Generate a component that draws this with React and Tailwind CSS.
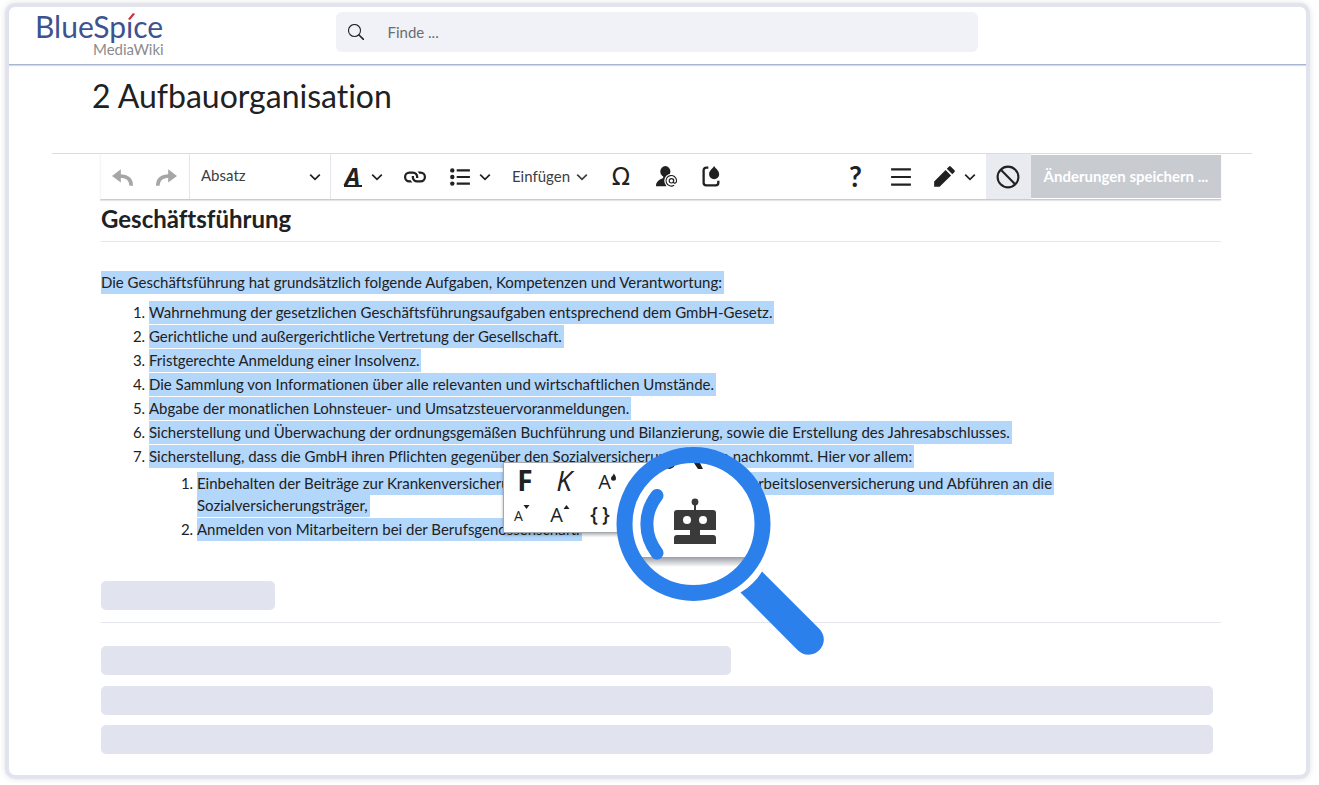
import React from 'react';

const tasks = [
  'Wahrnehmung der gesetzlichen Geschäftsführungsaufgaben entsprechend dem GmbH-Gesetz.',
  'Gerichtliche und außergerichtliche Vertretung der Gesellschaft.',
  'Fristgerechte Anmeldung einer Insolvenz.',
  'Die Sammlung von Informationen über alle relevanten und wirtschaftlichen Umstände.',
  'Abgabe der monatlichen Lohnsteuer- und Umsatzsteuervoranmeldungen.',
  'Sicherstellung und Überwachung der ordnungsgemäßen Buchführung und Bilanzierung, sowie die Erstellung des Jahresabschlusses.',
];

const subTasks = [
  'Einbehalten der Beiträge zur Krankenversicherung, Unfallversicherung, Renten- und Arbeitslosenversicherung und Abführen an die Sozialversicherungsträger,',
  'Anmelden von Mitarbeitern bei der Berufsgenossenschaft.',
];

const Marked = ({ children }) => (
  <span className="bg-[#b3d6fb] box-decoration-clone pt-[2px] pb-[3px] pr-[2px]">{children}</span>
);

const Icon = ({ children, className = 'w-5 h-5' }) => (
  <svg viewBox="0 0 20 20" fill="currentColor" className={`shrink-0 ${className}`} aria-hidden="true">
    {children}
  </svg>
);

const Chevron = ({ className = 'w-3 h-3' }) => (
  <Icon className={className}>
    <path d="m2 6 8 8 8-8" fill="none" stroke="currentColor" strokeWidth="2.8" />
  </Icon>
);

const Tool = ({ label, className, children, ...rest }) => (
  <button
    type="button"
    aria-label={label}
    className={`h-full shrink-0 flex items-center justify-center ${className}`}
    {...rest}
  >
    {children}
  </button>
);

const Header = () => (
  <header className="grid grid-cols-[1fr_642px_1fr] items-start h-[58px] border-b border-[#a9b4d2] shadow-[0_1px_1px_#d5dbe9]">
    <a href="#start" className="ml-[25px] w-[136px] h-[54px] block" aria-label="BlueSpice MediaWiki">
      <svg viewBox="0 0 136 54" className="w-[136px] h-[54px] font-['Lato',sans-serif]">
        <text x="1" y="31" fontSize="30" fill="#3c5390">BlueSp&#305;ce</text>
        <path d="M99 6 L101 7 L96 13 L94 12 Z" fill="#c8333a" />
        <text x="59" y="48" fontSize="15" fill="#8c8c8c">MediaWiki</text>
      </svg>
    </a>
    <label className="flex items-center h-10 mt-[5px] -ml-px mr-px rounded-md bg-[#f1f2f7] text-[#212529]">
      <svg viewBox="0 0 16 16" className="w-4 h-4 ml-3 mr-6" fill="none" stroke="currentColor" aria-hidden="true">
        <circle cx="6.500" cy="6.500" r="6" strokeWidth="1.100" />
        <path d="m11 11 4.500 4.500" strokeWidth="1.600" strokeLinecap="round" />
      </svg>
      <input
        type="search"
        aria-label="Suche"
        placeholder="Finde ..."
        className="flex-1 min-w-0 bg-transparent text-[15px] outline-none placeholder:text-[#6a6d72]"
      />
    </label>
  </header>
);

const Toolbar = () => (
  <div className="ml-12 mr-[31px] flex items-stretch h-[46px] border-b border-[#c8ccd1] border-l border-l-[#f5f5f7] shadow-[0_1px_1px_#e6e6e6]">
    <div className="flex w-[89px] border-r border-[#e4e5ec] text-[#a6a6a6]">
      <Tool label="Rückgängig" className="w-11" disabled>
        <Icon className="w-[22px] h-[22px]">
          <path d="M0 9 8 3v12z" />
          <path d="M7 9C13.500 9 17.500 11.500 17.500 18" fill="none" stroke="currentColor" strokeWidth="3.200" />
        </Icon>
      </Tool>
      <Tool label="Wiederholen" className="w-[42px]" disabled>
        <Icon className="w-[22px] h-[22px]">
          <path d="M20 9 12 3v12z" />
          <path d="M13 9C6.500 9 2.500 11.500 2.500 18" fill="none" stroke="currentColor" strokeWidth="3.200" />
        </Icon>
      </Tool>
    </div>
    <div className="grid w-[141px] border-r border-[#e4e5ec] items-center">
      <select
        aria-label="Format"
        className="[grid-area:1/1] appearance-none w-full h-full pl-[11px] pb-[2px] text-[15px] bg-transparent text-[#3b3e42]"
      >
        <option>Absatz</option>
      </select>
      <Chevron className="[grid-area:1/1] justify-self-end mr-[9px] w-3 h-3 pointer-events-none" />
    </div>
    <Tool label="Textstil" className="w-[64px] gap-[9px]">
      <span className="w-[18px] border-b-2 border-current text-[24px] leading-[19px] font-bold italic font-['Open_Sans',sans-serif]">
        A
      </span>
      <Chevron />
    </Tool>
    <Tool label="Verknüpfung" className="w-10">
      <Icon className="w-[22px] h-[22px]">
        <path d="M4.830 15h2.910a4.900 4.900 0 0 1-1.550-2H5a3 3 0 1 1 0-6h3a3 3 0 0 1 2.820 4h2.100a5 5 0 0 0 .080-.830v-.340A4.830 4.830 0 0 0 8.170 5H4.830A4.830 4.830 0 0 0 0 9.830v.340A4.830 4.830 0 0 0 4.830 15" />
        <path d="M15.170 5h-2.910a4.900 4.900 0 0 1 1.550 2H15a3 3 0 1 1 0 6h-3a3 3 0 0 1-2.820-4h-2.100a5 5 0 0 0-.080.830v.340A4.830 4.830 0 0 0 11.830 15h3.340A4.830 4.830 0 0 0 20 10.170v-.340A4.830 4.830 0 0 0 15.170 5" />
      </Icon>
    </Tool>
    <Tool label="Liste" className="w-[70px] gap-2">
      <Icon className="w-[22px] h-[22px]">
        <path d="M7 15h12v2H7zm0-6h12v2H7zm0-6h12v2H7z" />
        <circle cx="3" cy="4" r="2" />
        <circle cx="3" cy="10" r="2" />
        <circle cx="3" cy="16" r="2" />
      </Icon>
      <Chevron />
    </Tool>
    <Tool className="w-[90px] gap-[6px] text-[15px] text-[#3b3e42]">
      Einfügen
      <Chevron />
    </Tool>
    <Tool label="Sonderzeichen" className="w-[52px] text-[24px] font-['DejaVu_Sans',sans-serif]">
      Ω
    </Tool>
    <Tool label="Benutzer erwähnen" className="w-[40px]">
      <Icon className="w-[22px] h-[22px]">
        <ellipse cx="8.500" cy="5" rx="4.600" ry="4.900" />
        <path d="M0 18.500C0 14 3 12.500 6.500 11V8.500h4v2.500l2 1-3 6.500z" />
        <circle cx="14" cy="13.500" r="6.500" fill="white" />
        <circle cx="14" cy="13.500" r="2" fill="none" stroke="currentColor" strokeWidth="1" />
        <path d="M16 11.500v3.200c0 1.500 2.700 1.200 2.700-1.300a4.800 4.800 0 1 0-2.200 4.100" fill="none" stroke="currentColor" strokeWidth="1" />
      </Icon>
    </Tool>
    <Tool label="Semantik" className="w-12">
      <Icon className="w-[21px] h-[21px]">
        <path d="M7 1.500H5A2.500 2.500 0 0 0 2.500 4v12A2.500 2.500 0 0 0 5 18.500h9a2.500 2.500 0 0 0 2.500-2.500v-2" fill="none" stroke="currentColor" strokeWidth="2.200" />
        <path d="M12.500 0c1.500 2.500 4.800 4.500 4.800 7.800a4.800 4.800 0 0 1-9.600 0C7.700 4.500 11 2.500 12.500 0z" />
      </Icon>
    </Tool>
    <div className="ml-auto flex">
      <Tool label="Hilfe" className="w-[45px] pb-[2px] text-[28px] font-bold">
        ?
      </Tool>
      <Tool label="Seitenoptionen" className="w-[45px]">
        <Icon className="w-[22px] h-[22px]">
          <path d="M1 2v2h18V2zm0 9h18V9H1zm0 7h18v-2H1z" />
        </Icon>
      </Tool>
      <Tool label="Bearbeitungsmodus" className="w-[63px] gap-[8px]">
        <Icon className="w-[23px] h-[23px]">
          <path d="m16.770 8 1.940-2a1 1 0 0 0 0-1.410l-3.340-3.300a1 1 0 0 0-1.410 0L12 3.230zM1 14.250V19h4.750l9.960-9.960-4.750-4.750z" />
        </Icon>
        <Chevron />
      </Tool>
      <Tool label="Abbrechen" className="w-[45px] pr-px bg-[#eaebf0]">
        <Icon className="w-[26px] h-[26px]">
          <circle cx="10" cy="10" r="8" fill="none" stroke="currentColor" strokeWidth="1.600" />
          <path d="m4.300 4.300 11.400 11.400" fill="none" stroke="currentColor" strokeWidth="1.600" />
        </Icon>
      </Tool>
      <button
        type="button"
        disabled
        className="w-[190px] my-px bg-[#c8ccd1] text-white text-[15px] font-bold"
      >
        Änderungen speichern ...
      </button>
    </div>
  </div>
);

const ContextMenu = () => (
  <div className="absolute left-[402px] top-[262px] w-[200px] h-[71px] bg-white border border-[#a2a9b1] shadow-[0_2px_3px_rgba(0,0,0,0.3)] font-['Open_Sans',sans-serif]">
    <div className="flex h-[34px]">
      <Tool label="Fett" className="w-[42px] text-[28px] leading-none font-bold">F</Tool>
      <Tool label="Kursiv" className="w-9 text-[28px] leading-none font-medium italic">K</Tool>
      <Tool label="Textfarbe" className="w-[50px]">
        <span className="text-[20px] leading-none pt-1">A</span>
        <svg viewBox="0 0 6 10" className="w-[5px] h-[9px] self-start mt-[10px]" fill="currentColor" aria-hidden="true">
          <path d="M3.500 0C4 2 6 3.500 6 6a3 3 0 0 1-6 0c0-2 3-3.500 3.500-6z" />
        </svg>
      </Tool>
    </div>
    <div className="flex h-[33px]">
      <Tool label="Kleiner" className="w-9">
        <span className="text-[14px] leading-none pt-1">A</span>
        <svg viewBox="0 0 6 4" className="w-[7px] h-1 self-start mt-2" fill="currentColor" aria-hidden="true">
          <path d="M0 0h6L3 4z" />
        </svg>
      </Tool>
      <Tool label="Größer" className="w-10">
        <span className="text-[20px] leading-none font-medium pt-[3px]">A</span>
        <svg viewBox="0 0 6 4" className="w-[7px] h-1 self-start mt-2" fill="currentColor" aria-hidden="true">
          <path d="M0 4h6L3 0z" />
        </svg>
      </Tool>
      <Tool label="Code" className="w-10 gap-1 text-[20px] leading-none font-semibold">
        <span>{'{'}</span>
        <span>{'}'}</span>
      </Tool>
    </div>
  </div>
);

const Magnifier = () => (
  <svg viewBox="616 446 210 210" className="absolute left-[515px] top-[246px] w-[210px] h-[210px]" aria-hidden="true">
    <defs>
      <clipPath id="lens">
        <circle cx="693.500" cy="524" r="63" />
      </clipPath>
      <linearGradient id="edge" x1="0" y1="0" x2="0" y2="1">
        <stop offset="0" stopColor="#9a9da5" />
        <stop offset="1" stopColor="#ffffff" />
      </linearGradient>
    </defs>
    <circle cx="693.500" cy="524" r="70" fill="white" />
    <g clipPath="url(#lens)">
      <path d="M664 468l3-5h8l-1 4-4 2zM694 463h6l3 6h-5z" fill="#202122" />
      <rect x="630" y="557" width="130" height="10" fill="url(#edge)" />
    </g>
    <circle cx="693.500" cy="524" r="69" fill="none" stroke="#2c80ec" strokeWidth="16" />
    <path d="M657 495.500C643.500 513 643.500 535 657 553" fill="none" stroke="#2c80ec" strokeWidth="13" strokeLinecap="round" />
    <g fill="#3a3a3a">
      <circle cx="695" cy="502" r="3.400" />
      <path d="M694 502h2v9h-2z" />
      <path
        fillRule="evenodd"
        d="M677 510h36q3 0 3 3v17h-16v5h13q3 0 3 3v6h-42v-6q0-3 3-3h13v-5h-16v-17q0-3 3-3zM683 520a4 4 0 1 0 8 0a4 4 0 1 0-8 0zM699 520a4 4 0 1 0 8 0a4 4 0 1 0-8 0z"
      />
    </g>
    <path d="M762 571.500 819 628.500C825 634.500 825.500 643 820 649.500C814 656 804.500 656.500 798 650.500L740.500 592.500C749 587.500 756.500 580.500 762 571.500z" fill="#2c80ec" />
  </svg>
);

const App = () => {
  return (
    <div className="min-h-screen flex pt-[3px] pl-[5px] pr-[9px] pb-[6px] bg-white text-[#202122] font-['Lato',sans-serif] [font-variant-ligatures:none]">
      <div className="flex-1 min-w-0 bg-white border-4 border-[#e1e4ee] rounded-[10px] shadow-[0_0_6px_rgba(0,0,0,0.12)]">
        <Header />
        <main className="ml-[43px] mr-[54px] pb-5">
          <h1 className="pl-10 pt-[11px] pb-[37px] text-[32px] leading-10">2 Aufbauorganisation</h1>
          <div className="border-t border-[#dcdcdc]">
            <Toolbar />
          </div>
          <article className="relative ml-[49px] mr-[31px] text-[15px] leading-[22px]">
            <h2 className="text-[24px] leading-[30px] font-bold pt-1 pb-[7px] border-b border-[#e6e7ed]">
              Geschäftsführung
            </h2>
            <p className="mt-[29px]">
              <Marked>Die Geschäftsführung hat grundsätzlich folgende Aufgaben, Kompetenzen und Verantwortung:</Marked>
            </p>
            <ol className="list-decimal ml-12 mt-2">
              {tasks.map((task) => (
                <li key={task} className="mb-[2px]">
                  <Marked>{task}</Marked>
                </li>
              ))}
              <li>
                <Marked>Sicherstellung, dass die GmbH ihren Pflichten gegenüber den Sozialversicherungsträgern nachkommt. Hier vor allem:</Marked>
                <ol className="list-decimal ml-12 mt-[5px] max-w-[880px]">
                  {subTasks.map((task) => (
                    <li key={task} className="mb-[2px]">
                      <Marked>{task}</Marked>
                    </li>
                  ))}
                </ol>
              </li>
            </ol>
            <ContextMenu />
            <Magnifier />
            <div className="mt-[41px] h-[29px] w-[174px] rounded-[5px] bg-[#e1e4ee]" />
            <div className="mt-3 border-t border-[#e6e7ed]" />
            <div className="mt-[23px] h-[29px] w-[630px] rounded-[5px] bg-[#e1e4ee]" />
            <div className="mt-[11px] mr-2 h-[29px] rounded-[5px] bg-[#e1e4ee]" />
            <div className="mt-[10px] mr-2 h-[29px] rounded-[5px] bg-[#e1e4ee]" />
          </article>
        </main>
      </div>
    </div>
  );
};

export default App;
